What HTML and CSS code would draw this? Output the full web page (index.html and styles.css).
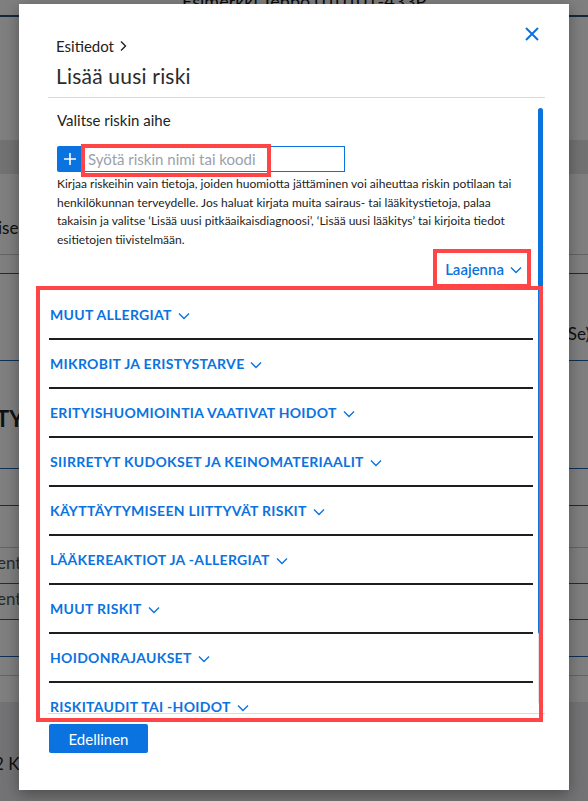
FILE: index.html
```html
<!DOCTYPE html>
<html lang="fi">
<head>
    <meta charset="UTF-8">
    <title>Lisää uusi riski</title>
    <link rel="stylesheet" href="styles.css">
</head>
<body>
    <!-- patient page behind the dialog -->
    <div class="page">
        <div class="page-head"><span class="patient">Esimerkki Teppo 010101-433P</span></div>
        <div class="page-space tall"></div>
        <div class="page-band"></div>
        <div class="page-row">
            <span class="cut-left">ise:</span>
            <span class="cut-right">5Se)</span>
        </div>
        <div class="page-line"></div>
        <div class="page-space small"></div>
        <div class="page-line blue"></div>
        <div class="page-space mid"></div>
        <div class="page-line blue"></div>
        <div class="page-heading">TY</div>
        <div class="page-line blue"></div>
        <div class="page-space mid2"></div>
        <div class="page-line blue"></div>
        <div class="page-space mid3"></div>
        <div class="page-line"></div>
        <div class="page-field">entt</div>
        <div class="page-line blue"></div>
        <div class="page-field">entt</div>
        <div class="page-line blue"></div>
        <div class="page-space mid4"></div>
        <div class="page-line blue"></div>
        <div class="page-space small"></div>
        <div class="page-line"></div>
        <div class="page-space mid5"></div>
        <div class="page-foot">
            <span class="visit">2 Käynti (DM)</span>
            <div class="foot-search"><span class="foot-plus">+</span><span class="foot-input">Syötä tulohetken, lääkärin nimi tai käynti</span></div>
        </div>
    </div>

    <div class="overlay"></div>

    <div class="modal">
        <button class="close" aria-label="Sulje">
            <svg width="16" height="16" viewBox="0 0 16 16"><path d="M2 2 L14 14 M14 2 L2 14" stroke="currentColor" stroke-width="2" fill="none"/></svg>
        </button>

        <header class="modal-head">
            <div class="crumb">Esitiedot
                <svg width="10" height="12" viewBox="0 0 10 12"><path d="M3 1.5 L7.5 6 L3 10.5" stroke="currentColor" stroke-width="1.4" fill="none"/></svg>
            </div>
            <h2 class="title">Lisää uusi riski</h2>
        </header>

        <div class="modal-body">
            <div class="scroll">
                <div class="label">Valitse riskin aihe</div>
                <div class="search">
                    <span class="plus">
                        <svg width="14" height="14" viewBox="0 0 14 14"><path d="M7 1 V13 M1 7 H13" stroke="#fff" stroke-width="1.6"/></svg>
                    </span>
                    <input class="search-input" type="text" placeholder="Syötä riskin nimi tai koodi">
                </div>
                <p class="hint">Kirjaa riskeihin vain tietoja, joiden huomiotta jättäminen voi aiheuttaa riskin potilaan tai henkilökunnan terveydelle. Jos haluat kirjata muita sairaus- tai lääkitystietoja, palaa takaisin ja valitse ‘Lisää uusi pitkäaikaisdiagnoosi’, ‘Lisää uusi lääkitys’ tai kirjoita tiedot esitietojen tiivistelmään.</p>
                <div class="expand-row">
                    <button class="expand">Laajenna
                        <svg class="chev" width="12" height="8" viewBox="0 0 12 8"><path d="M1 1.5 L6 6.5 L11 1.5" stroke="currentColor" stroke-width="1.4" fill="none"/></svg>
                    </button>
                </div>
                <ul class="groups">
                    <li><button class="group">MUUT ALLERGIAT <svg class="chev" width="12" height="8" viewBox="0 0 12 8"><path d="M1 1.5 L6 6.5 L11 1.5" stroke="currentColor" stroke-width="1.4" fill="none"/></svg></button></li>
                    <li><button class="group">MIKROBIT JA ERISTYSTARVE <svg class="chev" width="12" height="8" viewBox="0 0 12 8"><path d="M1 1.5 L6 6.5 L11 1.5" stroke="currentColor" stroke-width="1.4" fill="none"/></svg></button></li>
                    <li><button class="group">ERITYISHUOMIOINTIA VAATIVAT HOIDOT <svg class="chev" width="12" height="8" viewBox="0 0 12 8"><path d="M1 1.5 L6 6.5 L11 1.5" stroke="currentColor" stroke-width="1.4" fill="none"/></svg></button></li>
                    <li><button class="group">SIIRRETYT KUDOKSET JA KEINOMATERIAALIT <svg class="chev" width="12" height="8" viewBox="0 0 12 8"><path d="M1 1.5 L6 6.5 L11 1.5" stroke="currentColor" stroke-width="1.4" fill="none"/></svg></button></li>
                    <li><button class="group">KÄYTTÄYTYMISEEN LIITTYVÄT RISKIT <svg class="chev" width="12" height="8" viewBox="0 0 12 8"><path d="M1 1.5 L6 6.5 L11 1.5" stroke="currentColor" stroke-width="1.4" fill="none"/></svg></button></li>
                    <li><button class="group">LÄÄKEREAKTIOT JA -ALLERGIAT <svg class="chev" width="12" height="8" viewBox="0 0 12 8"><path d="M1 1.5 L6 6.5 L11 1.5" stroke="currentColor" stroke-width="1.4" fill="none"/></svg></button></li>
                    <li><button class="group">MUUT RISKIT <svg class="chev" width="12" height="8" viewBox="0 0 12 8"><path d="M1 1.5 L6 6.5 L11 1.5" stroke="currentColor" stroke-width="1.4" fill="none"/></svg></button></li>
                    <li><button class="group">HOIDONRAJAUKSET <svg class="chev" width="12" height="8" viewBox="0 0 12 8"><path d="M1 1.5 L6 6.5 L11 1.5" stroke="currentColor" stroke-width="1.4" fill="none"/></svg></button></li>
                    <li><button class="group">RISKITAUDIT TAI -HOIDOT <svg class="chev" width="12" height="8" viewBox="0 0 12 8"><path d="M1 1.5 L6 6.5 L11 1.5" stroke="currentColor" stroke-width="1.4" fill="none"/></svg></button></li>
                </ul>
            </div>
            <div class="scrollbar"><div class="thumb"></div></div>
        </div>

        <div class="modal-foot">
            <button class="prev">Edellinen</button>
        </div>

        <!-- highlight frames -->
        <div class="mark mark-input"></div>
        <div class="mark mark-expand"></div>
        <div class="mark mark-list"></div>
    </div>
</body>
</html>
```

FILE: styles.css
```css
* {
    box-sizing: border-box;
}

body {
    margin: 0;
    font-family: Lato, "Noto Sans", sans-serif;
    color: #222;
    overflow: hidden;
    height: 801px;
}

/* page behind */
.page {
    background: #fff;
    height: 801px;
    display: flex;
    flex-direction: column;
}

.page-head {
    height: 17px;
    border-bottom: 2px solid #2a4f7e;
    position: relative;
    overflow: hidden;
}

.patient {
    display: block;
    margin: -10px 0 0 182px;
    font-size: 18px;
    color: #111;
}

.page-space.tall { height: 123px; }
.page-space.small { height: 18px; }
.page-space.mid { height: 86px; }
.page-space.mid2 { height: 36px; }
.page-space.mid3 { height: 41px; }
.page-space.mid4 { height: 36px; }
.page-space.mid5 { height: 26px; }

.page-band {
    height: 34px;
    background: #e4e4e4;
}

.page-row {
    height: 80px;
    display: flex;
    justify-content: space-between;
    align-items: flex-end;
    padding-bottom: 16px;
    font-size: 17px;
}

.cut-left {
    margin-left: -2px;
}

.cut-right {
    margin-bottom: -106px;
    margin-right: -2px;
}

.page-line {
    height: 1px;
    background: #c8c8c8;
}

.page-line.blue {
    background: #1f5ea8;
}

.page-heading {
    height: 107px;
    padding-top: 44px;
    font-size: 22px;
    font-weight: 700;
    margin-left: -4px;
}

.page-field {
    height: 35px;
    padding-top: 4px;
    font-size: 17px;
    color: #555;
    margin-left: -3px;
}

.page-foot {
    flex: 1;
    background: #e6e6ea;
    display: flex;
    align-items: flex-start;
    gap: 30px;
    padding-top: 47px;
}

.visit {
    font-size: 17px;
    margin-left: -6px;
    margin-top: 4px;
}

.foot-search {
    display: flex;
    width: 376px;
    height: 30px;
    border: 1px solid #333;
    background: #fff;
}

.foot-plus {
    width: 24px;
    background: #034ea2;
    color: #fff;
    text-align: center;
}

.foot-input {
    padding: 4px 8px;
    color: #666;
    font-size: 15px;
}

.overlay {
    position: absolute;
    inset: 0;
    background: rgba(0, 0, 0, 0.5);
}

/* dialog */
.modal {
    position: absolute;
    left: 19px;
    top: 4px;
    width: 550px;
    height: 786px;
    background: #fff;
    box-shadow: 0 4px 14px rgba(0, 0, 0, 0.35);
    padding: 32px 24px 0 29px;
    display: flex;
    flex-direction: column;
}

.close {
    position: absolute;
    top: 22px;
    right: 29px;
    border: none;
    background: none;
    padding: 0;
    color: #0a73e0;
    cursor: pointer;
}

.modal-head {
    padding: 0 0 7px 8px;
    border-bottom: 1px solid #d3dae1;
}

.crumb {
    font-size: 15px;
    line-height: 20px;
    color: #222;
    display: flex;
    align-items: center;
    gap: 4px;
}

.title {
    margin: 6px 0 0;
    font-size: 21px;
    line-height: 28px;
    font-weight: 400;
    color: #2b2b2b;
    letter-spacing: 0.2px;
}

.modal-body {
    height: 616px;
    display: flex;
    border-bottom: 1px solid #d3dae1;
}

.scroll {
    flex: 1;
    overflow: hidden;
    padding: 12px 0 0 9px;
}

.scrollbar {
    width: 5px;
    margin: 10px 2px 9px 0;
    background: #e2e2e2;
    border-radius: 3px;
}

.thumb {
    height: 526px;
    background: #0a73e0;
    border-radius: 3px;
}

.label {
    font-size: 15px;
    line-height: 20px;
}

.search {
    display: flex;
    width: 288px;
    height: 26px;
    margin-top: 16px;
}

.plus {
    width: 25px;
    background: #0a73e0;
    border-radius: 2px 0 0 2px;
    display: flex;
    align-items: center;
    justify-content: center;
}

.search-input {
    flex: 1;
    border: 1px solid #0a73e0;
    border-left: none;
    font: inherit;
    font-size: 15px;
    padding: 0 6px;
    outline: none;
}

.search-input::placeholder {
    color: #9aa1aa;
}

.hint {
    margin: 3px 0 0;
    font-size: 12px;
    line-height: 18.5px;
    width: 462px;
}

.expand-row {
    display: flex;
    justify-content: flex-end;
    padding-right: 16px;
    margin-top: 10px;
}

.expand {
    border: none;
    background: none;
    padding: 0;
    font: inherit;
    font-size: 15px;
    line-height: 20px;
    font-weight: 600;
    color: #0a73e0;
    display: flex;
    align-items: center;
    gap: 6px;
}

.groups {
    list-style: none;
    margin: 12px 5px 0 -8px;
    padding: 0;
}

.groups li {
    padding: 14px 0 13px 1px;
    border-bottom: 2px solid #1e1e1e;
}

.group {
    border: none;
    background: none;
    padding: 0;
    font: inherit;
    font-size: 14px;
    line-height: 20px;
    font-weight: 700;
    letter-spacing: 0.3px;
    color: #0a73e0;
    display: flex;
    align-items: center;
    gap: 6px;
}

.chev {
    margin-top: 1px;
}

.modal-foot {
    padding: 10px 0 0 1px;
}

.prev {
    width: 99px;
    height: 29px;
    border: none;
    border-radius: 2px;
    background: #0a73e0;
    color: #fff;
    font: inherit;
    font-size: 15px;
}

/* red highlight frames over the dialog */
.mark {
    position: absolute;
    border: 4px solid #ff4545;
    pointer-events: none;
}

.mark-input {
    left: 62px;
    top: 140px;
    width: 190px;
    height: 33px;
}

.mark-expand {
    left: 414px;
    top: 245px;
    width: 98px;
    height: 39px;
}

.mark-list {
    left: 17px;
    top: 282px;
    width: 507px;
    height: 436px;
}
```
